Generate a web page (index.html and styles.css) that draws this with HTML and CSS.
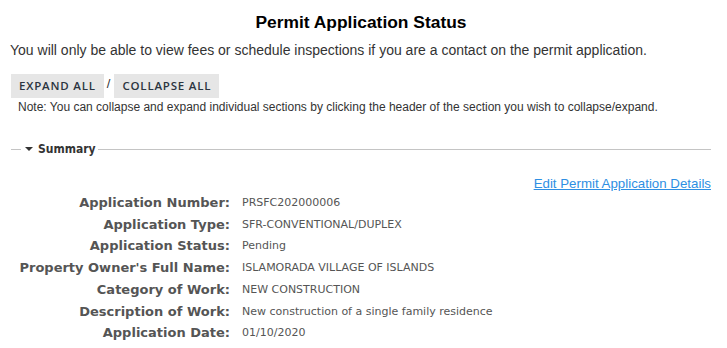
FILE: index.html
```html
<!DOCTYPE html>
<html>
<head>
<meta charset="utf-8">
<link rel="stylesheet" href="styles.css">
</head>
<body>
<div class="page">
  <h1 class="title">Permit Application Status</h1>
  <p class="intro">You will only be able to view fees or schedule inspections if you are a contact on the permit application.</p>
  <div class="toggles">
    <span class="btn">EXPAND ALL</span>
    <span class="sep">/</span>
    <span class="btn">COLLAPSE ALL</span>
  </div>
  <p class="note">Note: You can collapse and expand individual sections by clicking the header of the section you wish to collapse/expand.</p>
  <fieldset class="section">
    <legend class="legend"><span class="caret"></span>Summary</legend>
    <div class="link-row"><a class="edit" href="#">Edit Permit Application Details</a></div>
    <div class="rows">
      <div class="label">Application Number:</div><div class="value">PRSFC202000006</div>
      <div class="label">Application Type:</div><div class="value">SFR-CONVENTIONAL/DUPLEX</div>
      <div class="label">Application Status:</div><div class="value">Pending</div>
      <div class="label">Property Owner's Full Name:</div><div class="value">ISLAMORADA VILLAGE OF ISLANDS</div>
      <div class="label">Category of Work:</div><div class="value">NEW CONSTRUCTION</div>
      <div class="label">Description of Work:</div><div class="value">New construction of a single family residence</div>
      <div class="label">Application Date:</div><div class="value">01/10/2020</div>
    </div>
  </fieldset>
</div>
</body>
</html>
```

FILE: styles.css
```css
html, body {
  margin: 0;
  padding: 0;
  background: #fff;
}
.page {
  padding: 0 16px 0 11px;
  font-family: "Liberation Sans", Arial, sans-serif;
  color: #333;
}
.title {
  margin: 0;
  padding-top: 12px;
  text-align: center;
  font-size: 17.4px;
  line-height: 20px;
  font-weight: bold;
  color: #000;
}
.intro {
  margin: 9px 0 0 -1px;
  font-size: 14px;
  line-height: 18px;
  color: #333;
}
.toggles {
  display: flex;
  align-items: center;
  margin-top: 15px;
}
.btn {
  display: inline-block;
  background: #e6e6e6;
  padding: 0 8px;
  height: 24px;
  line-height: 24px;
  font-family: "Open Sans", sans-serif;
  font-weight: 600;
  font-size: 11.5px;
  letter-spacing: 0.8px;
  color: #2b3440;
}
.sep {
  margin: 0 4px 0 3px;
  font-size: 13px;
  color: #333;
  position: relative;
  top: -3px;
}
.note {
  margin: 2px 0 0 7px;
  font-size: 12px;
  line-height: 14px;
  color: #333;
}
.section {
  margin: 28px 0 0 0;
  padding: 0;
  border: none;
  border-top: 1px solid #c4c4c4;
  min-width: 0;
}
.legend {
  padding: 0 2px 0 4px;
  margin-left: 10px;
  font-family: "DejaVu Sans Condensed", "DejaVu Sans", Tahoma, sans-serif;
  font-stretch: condensed;
  font-weight: bold;
  font-size: 12px;
  color: #333;
  display: flex;
  align-items: center;
}
.caret {
  width: 0;
  height: 0;
  border-left: 4px solid transparent;
  border-right: 4px solid transparent;
  border-top: 4px solid #333;
  margin-right: 5px;
}
.link-row {
  display: flex;
  justify-content: flex-end;
  margin-top: 20px;
}
.edit {
  font-size: 13.3px;
  line-height: 16px;
  color: #2e8fe3;
  text-decoration: underline;
}
.rows {
  display: grid;
  grid-template-columns: 219px 1fr;
  column-gap: 12px;
  row-gap: 0;
  margin-top: 0;
}
.label {
  text-align: right;
  font-family: "DejaVu Sans", Verdana, sans-serif;
  font-weight: bold;
  font-size: 13px;
  line-height: 21.7px;
  color: #555;
  white-space: nowrap;
}
.value {
  font-family: "DejaVu Sans", Tahoma, sans-serif;
  font-size: 11px;
  line-height: 21.7px;
  color: #555;
  white-space: nowrap;
}
```
